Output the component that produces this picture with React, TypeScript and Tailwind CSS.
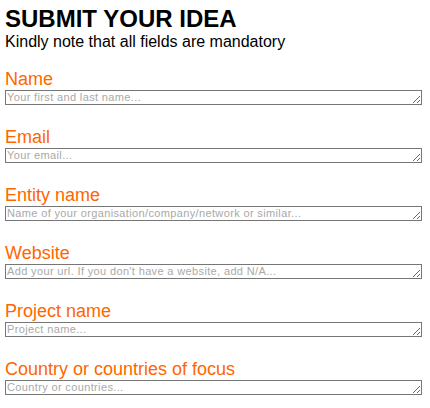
import React from "react";

const fields = [
  { label: "Name", placeholder: "Your first and last name..." },
  { label: "Email", placeholder: "Your email..." },
  { label: "Entity name", placeholder: "Name of your organisation/company/network or similar..." },
  { label: "Website", placeholder: "Add your url. If you don't have a website, add N/A..." },
  { label: "Project name", placeholder: "Project name..." },
  { label: "Country or countries of focus", placeholder: "Country or countries..." },
];

export default function App() {
  return (
    <div className="bg-white w-[430px] h-[408px] overflow-hidden pt-[5px] pl-[5px] pr-[8px] font-['Liberation_Sans',Arial,sans-serif] text-black">
      <h1 className="text-[24px] leading-[28px] font-bold">SUBMIT YOUR IDEA</h1>
      <p className="text-[16px] leading-[18px]">Kindly note that all fields are mandatory</p>
      <form className="mt-[18px] flex flex-col gap-[22px]">
        {fields.map((f) => (
          <div key={f.label} className="flex flex-col">
            <label className="text-[18px] leading-[21px] text-[#ff6600]">{f.label}</label>
            <textarea
              rows={1}
              placeholder={f.placeholder}
              className="block w-full h-[15px] border border-[#767676] px-[1px] py-0 text-[11px] leading-[13px] tracking-[0.36px] placeholder:text-[#a9a9a9] bg-white overflow-hidden"
            />
          </div>
        ))}
      </form>
    </div>
  );
}
